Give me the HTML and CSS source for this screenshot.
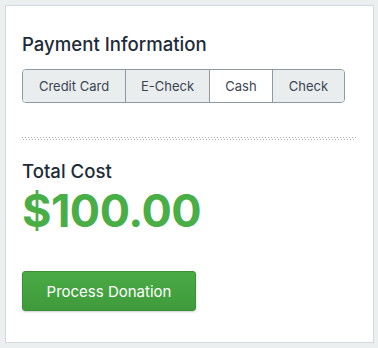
FILE: index.html
```html
<!DOCTYPE html>
<html>
<head>
<meta charset="utf-8">
<link rel="stylesheet" href="styles.css">
</head>
<body>
<div class="card">
  <h2 class="title">Payment Information</h2>
  <div class="segments">
    <div class="seg">Credit Card</div>
    <div class="seg">E-Check</div>
    <div class="seg active">Cash</div>
    <div class="seg">Check</div>
  </div>
  <div class="dots"></div>
  <h2 class="title total">Total Cost</h2>
  <div class="amount">$100.00</div>
  <button class="btn">Process Donation</button>
</div>
</body>
</html>
```
FILE: styles.css
```css
html, body {
  margin: 0;
  padding: 0;
  background: #ebeff0;
  font-family: "Inter", "Noto Sans", sans-serif;
}
body {
  padding: 5px 4px 5px 5px;
}
.card {
  box-sizing: border-box;
  height: 338px;
  background: #fff;
  border: 1px solid #d3d9dc;
  padding: 26px 16px 0 16px;
  display: flex;
  flex-direction: column;
  align-items: flex-start;
}
.title {
  margin: 0;
  font-size: 18.6px;
  font-weight: 500;
  line-height: 24px;
  color: #1e2b38;
}
.segments {
  margin-top: 13px;
  display: flex;
  border: 1px solid #8e99a2;
  border-radius: 4px;
  overflow: hidden;
  height: 34px;
  box-sizing: border-box;
}
.seg {
  display: flex;
  align-items: center;
  justify-content: center;
  background: #e9edee;
  color: #3b4552;
  font-size: 13px;
  border-left: 1px solid #8e99a2;
}
.seg:first-child { border-left: none; width: 102px; }
.seg:nth-child(2) { width: 83px; }
.seg:nth-child(3) { width: 62px; }
.seg:nth-child(4) { width: 71px; }
.seg.active { background: #fff; }
.dots {
  align-self: stretch;
  margin-top: 34px;
  margin-right: 1px;
  height: 4px;
  background-image:
    linear-gradient(90deg, #a6b0b6 1px, transparent 1px),
    linear-gradient(90deg, transparent 1px, #a6b0b6 1px, #a6b0b6 2px, transparent 2px);
  background-size: 3px 1px, 3px 1px;
  background-position: 0 0, 0 2px;
  background-repeat: repeat-x;
}
.total {
  margin-top: 18px;
}
.amount {
  margin-top: 3px;
  font-size: 45px;
  font-weight: 700;
  color: #4aae47;
  line-height: 50px;
  letter-spacing: -0.5px;
}
.btn {
  margin-top: 35px;
  width: 174px;
  height: 40px;
  border: 1px solid #3a8f37;
  border-radius: 3px;
  background: linear-gradient(#4aab45, #3f9a3b);
  color: #fff;
  font-family: inherit;
  font-size: 15px;
  padding: 0;
  box-shadow: 0 1px 2px rgba(0,0,0,0.2);
}
```
